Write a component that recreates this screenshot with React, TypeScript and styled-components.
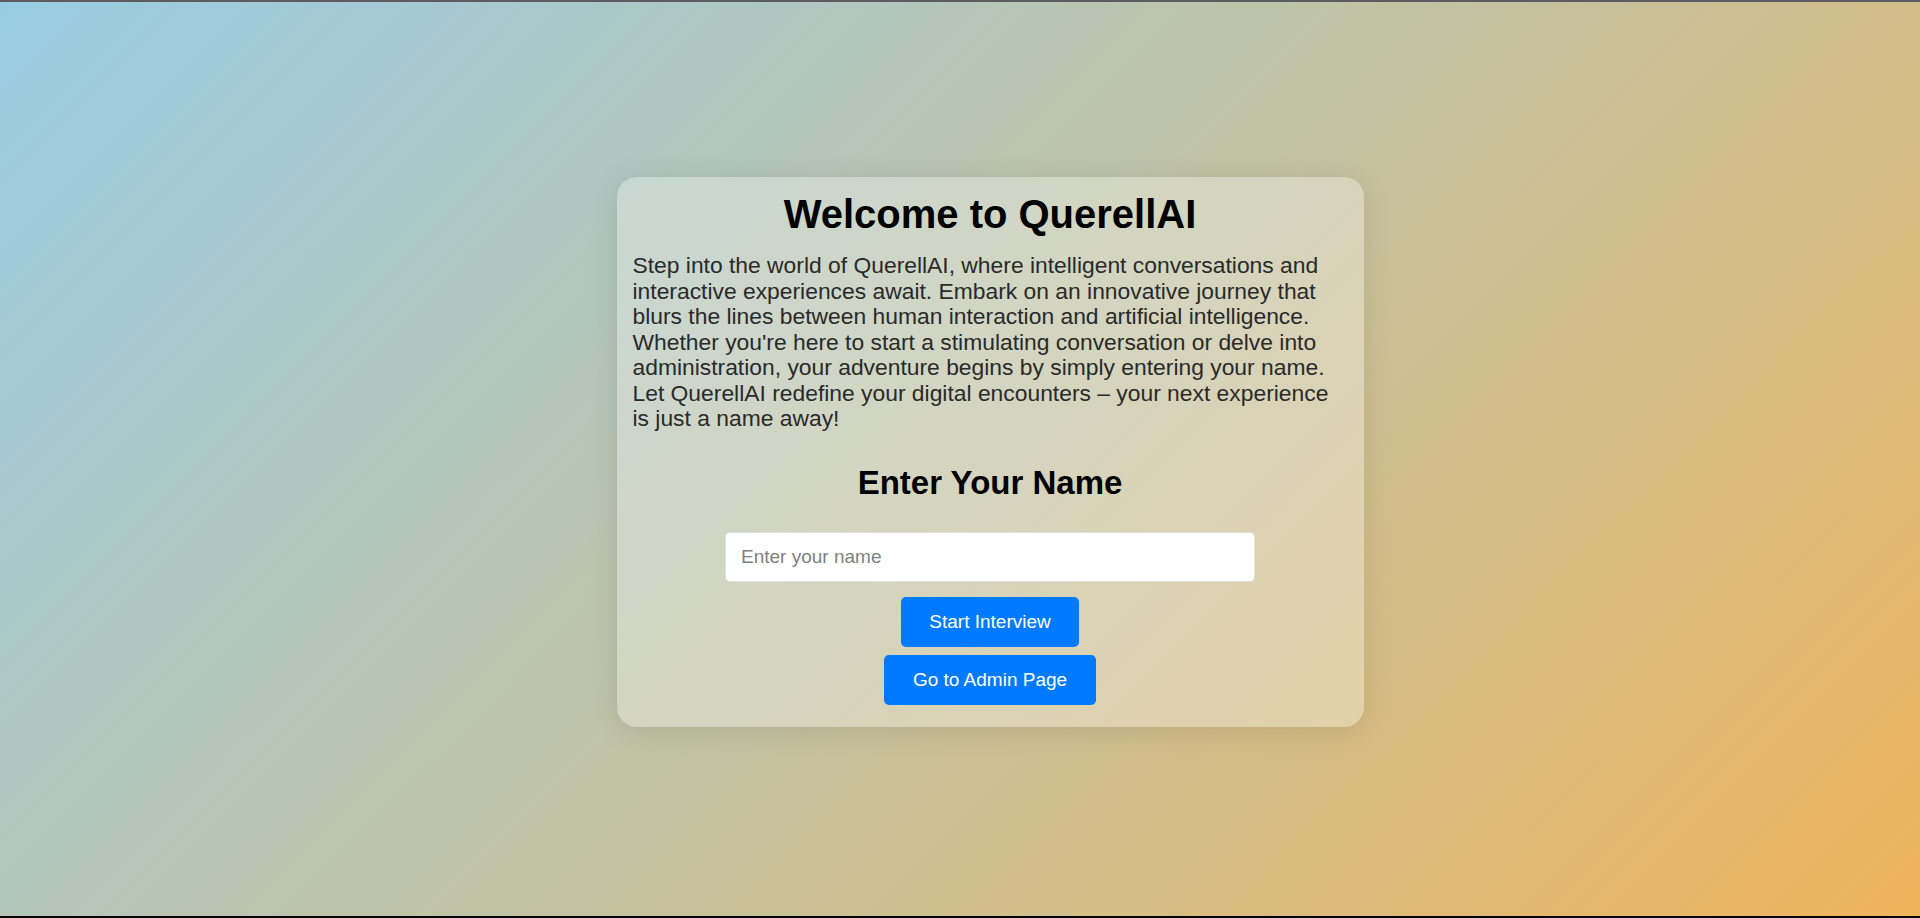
import React from "react";
import styled, { createGlobalStyle } from "styled-components";

const GlobalStyle = createGlobalStyle`
  html, body {
    margin: 0;
    padding: 0;
    height: 100%;
  }
  body {
    font-family: "Liberation Sans", Arial, sans-serif;
  }
  * { box-sizing: border-box; }
`;

const Page = styled.div`
  min-height: 918px;
  height: 918px;
  border-top: 2px solid #5b5b60;
  border-bottom: 2px solid #000;
  background: linear-gradient(135deg, #99cce4 0%, #c2c3a4 50%, #eeb45c 100%);
  display: flex;
  align-items: center;
  justify-content: center;
  padding: 0 0 14px 60px;
`;

const Card = styled.div`
  width: 747px;
  padding: 15px 16px 22px;
  border-radius: 20px;
  background: rgba(255, 255, 255, 0.3);
  box-shadow: 0 4px 30px rgba(0, 0, 0, 0.1);
  display: flex;
  flex-direction: column;
  align-items: center;
`;

const Title = styled.h1`
  margin: 0;
  font-size: 40px;
  font-weight: 700;
  color: #000;
  line-height: normal;
  text-align: center;
`;

const Intro = styled.p`
  margin: 16px 0 0;
  font-size: 22.85px;
  line-height: 25.5px;
  color: #2a2a2a;
  text-align: left;
  align-self: stretch;
`;

const Heading = styled.h2`
  margin: 32px 0 30px;
  font-size: 33px;
  font-weight: 700;
  color: #000;
  line-height: normal;
`;

const NameInput = styled.input`
  width: 530px;
  height: 50px;
  padding: 0 15px;
  border: 1px solid #e2e2e2;
  border-radius: 5px;
  background: #fff;
  font-family: "Liberation Sans", Arial, sans-serif;
  font-size: 19px;
  color: #222;
  outline: none;
  &::placeholder {
    color: #808080;
  }
`;

const Actions = styled.div`
  margin-top: 15px;
  display: flex;
  flex-direction: column;
  align-items: center;
  gap: 8px;
`;

const ActionButton = styled.button`
  height: 50px;
  padding: 0 28.5px;
  border: none;
  border-radius: 5px;
  background: #007bff;
  color: #fff;
  font-family: "Liberation Sans", Arial, sans-serif;
  font-size: 19px;
  cursor: pointer;
`;

export default function App() {
  return (
    <>
      <GlobalStyle />
      <Page>
        <Card>
          <Title>Welcome to QuerellAI</Title>
          <Intro>
            Step into the world of QuerellAI, where intelligent conversations and
            interactive experiences await. Embark on an innovative journey that
            blurs the lines between human interaction and artificial intelligence.
            Whether you're here to start a stimulating conversation or delve into
            administration, your adventure begins by simply entering your name.
            Let QuerellAI redefine your digital encounters – your next experience
            is just a name away!
          </Intro>
          <Heading>Enter Your Name</Heading>
          <NameInput type="text" placeholder="Enter your name" />
          <Actions>
            <ActionButton>Start Interview</ActionButton>
            <ActionButton>Go to Admin Page</ActionButton>
          </Actions>
        </Card>
      </Page>
    </>
  );
}
